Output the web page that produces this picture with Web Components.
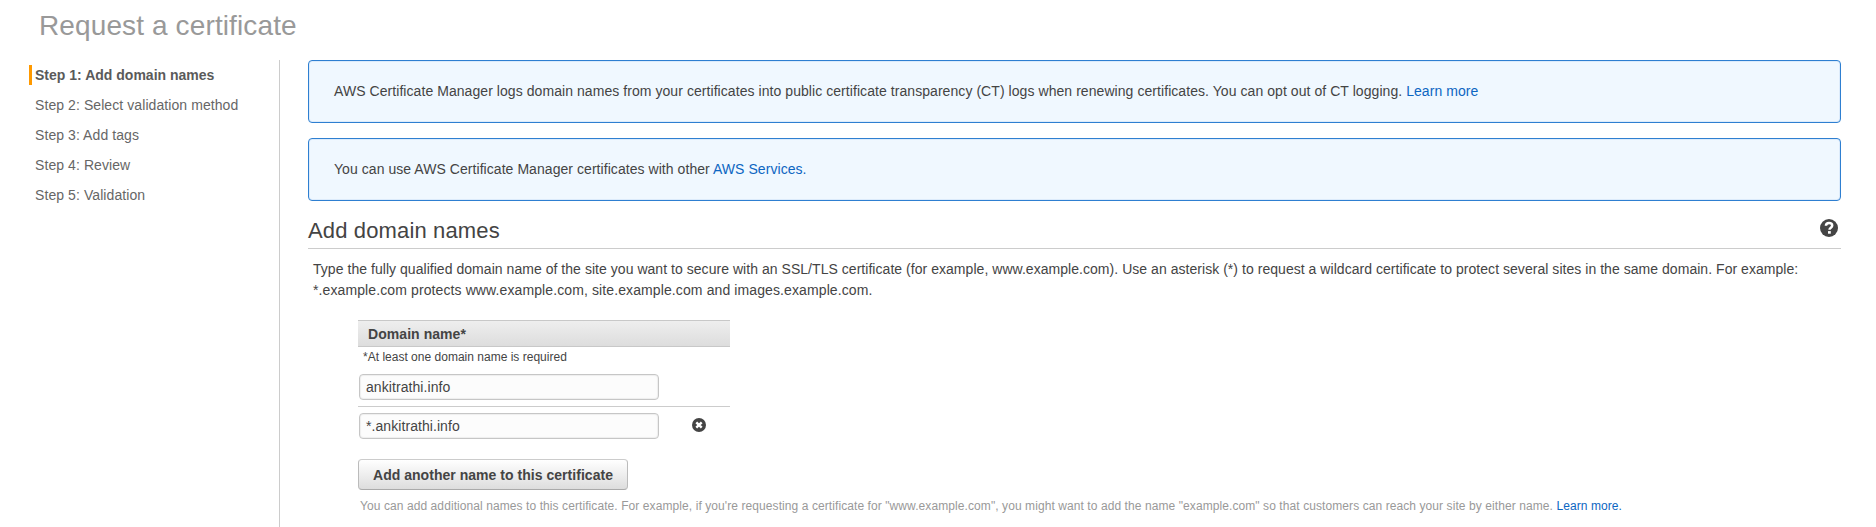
<!DOCTYPE html>
<html lang="en">
<head>
<meta charset="utf-8">
<title>Request a certificate</title>
<style>
  body { margin: 0; background: #fff; color: #444; font: 14px/20px "Liberation Sans", Arial, sans-serif; overflow: hidden; }
</style>
</head>
<body>
<acm-wizard heading="Request a certificate">
  <acm-step slot="steps" active style="letter-spacing:.01px">Step 1: Add domain names</acm-step>
  <acm-step slot="steps">Step 2: Select validation method</acm-step>
  <acm-step slot="steps">Step 3: Add tags</acm-step>
  <acm-step slot="steps">Step 4: Review</acm-step>
  <acm-step slot="steps">Step 5: Validation</acm-step>

  <acm-notice style="letter-spacing:.063px">AWS Certificate Manager logs domain names from your certificates into public certificate transparency (CT) logs when renewing certificates. You can opt out of CT logging. <acm-link>Learn more</acm-link></acm-notice>
  <acm-notice style="letter-spacing:.056px">You can use AWS Certificate Manager certificates with other <acm-link>AWS Services.</acm-link></acm-notice>

  <acm-section heading="Add domain names">
    <span slot="description">Type the fully qualified domain name of the site you want to secure with an SSL/TLS certificate (for example, www.example.com). Use an asterisk (*) to request a wildcard certificate to protect several sites in the same domain. For example:<br><span style="letter-spacing:.108px">*.example.com protects www.example.com, site.example.com and images.example.com.</span></span>
    <acm-domain-table heading="Domain name*" note="*At least one domain name is required">
      <acm-domain-row value="ankitrathi.info"></acm-domain-row>
      <acm-domain-row value="*.ankitrathi.info" removable></acm-domain-row>
    </acm-domain-table>
    <acm-button>Add another name to this certificate</acm-button>
    <acm-hint>You can add additional names to this certificate. For example, if you're requesting a certificate for "www.example.com", you might want to add the name "example.com" so that customers can reach your site by either name. <acm-link>Learn more.</acm-link></acm-hint>
  </acm-section>
</acm-wizard>

<script>
  const define = (name, render) => customElements.define(name, class extends HTMLElement {
    connectedCallback() {
      if (this.shadowRoot) return;
      this.attachShadow({ mode: 'open' }).innerHTML = render(this);
    }
  });

  define('acm-wizard', el => `
    <style>
      :host { display: grid; grid-template: 60px 467px / 279px 1fr; }
      h1 { grid-column: 1 / -1; margin: 0; padding: 9px 0 0 39px; font-weight: 400; font-size: 28px; line-height: 33px; letter-spacing: .12px; color: #999; }
      nav { padding-left: 29px; }
      main { border-left: 1px solid #ccc; padding: 0 35px 0 28px; display: flex; flex-direction: column; }
    </style>
    <h1>${el.getAttribute('heading')}</h1>
    <nav><slot name="steps"></slot></nav>
    <main><slot></slot></main>`);

  define('acm-step', () => `
    <style>
      :host { display: flex; align-items: center; height: 30px; line-height: 30px; color: #666; letter-spacing: .08px; }
      :host([active]) { font-weight: 700; color: #5a5a5a; }
      i { width: 3px; height: 20px; margin-right: 3px; }
      :host([active]) i { background: #f90; }
    </style>
    <i></i><slot></slot>`);

  define('acm-link', () => `
    <style>:host { display: inline; color: #0d66c2; cursor: pointer; }</style><slot></slot>`);

  define('acm-notice', () => `
    <style>
      :host { display: block; box-sizing: border-box; height: 63px; margin-bottom: 15px; padding: 20px 25px 0;
        border: 1px solid #2e7fd1; border-radius: 4px; background: #f0f8ff; box-shadow: inset 0 0 0 1px #dcebfb; }
    </style>
    <slot></slot>`);

  define('acm-section', el => `
    <style>
      :host { display: block; margin-top: 1px; }
      header { display: flex; justify-content: space-between; align-items: flex-start; border-bottom: 1px solid #ccc; padding-bottom: 4px; }
      h2 { margin: 1px 0 0; font-weight: 400; font-size: 22px; line-height: 26px; letter-spacing: .14px; }
      svg { margin: 2px 3px 0 0; }
      p { margin: 10px 0 19px; padding-left: 5px; line-height: 21px; letter-spacing: .0415px; white-space: nowrap; }
      .body { padding-left: 50px; }
    </style>
    <header>
      <h2>${el.getAttribute('heading')}</h2>
      <svg width="18" height="18" viewBox="0 0 18 18"><circle cx="9" cy="9" r="9" fill="#444"/><path d="M5.9 6.8C6 4.9 7.3 4.1 9 4.1c1.800 0 3.200.9 3.200 2.500 0 2.200-2.700 2-2.700 4.100" fill="none" stroke="#fff" stroke-width="2.500"/><rect x="8" y="12.100" width="2.800" height="2.600" fill="#fff"/></svg>
    </header>
    <p><slot name="description"></slot></p>
    <div class="body"><slot></slot></div>`);

  define('acm-domain-table', el => `
    <style>
      :host { display: block; width: 372px; }
      .head { border: solid #c8c8c8; border-width: 1px 0; padding: 1px 10px 0; line-height: 24px; font-weight: 700; letter-spacing: .06px; background: linear-gradient(#eee, #ddd); }
      .note { padding: 2px 5px 3px; font-size: 12px; line-height: 16px; letter-spacing: .01px; }
    </style>
    <div class="head">${el.getAttribute('heading')}</div>
    <div class="note">${el.getAttribute('note')}</div>
    <slot></slot>`);

  define('acm-domain-row', el => `
    <style>
      :host { display: flex; align-items: center; padding: 6px 0 6px 1px; }
      :host([removable]) { border-top: 1px solid #ccc; }
      .field { box-sizing: border-box; width: 300px; height: 26px; border: 1px solid #c6c6c6; border-radius: 4px; padding-left: 6px; line-height: 24px; letter-spacing: .07px;
        background: #fcfcfc; box-shadow: inset 0 0 1px 1px #eee; }
      svg { margin: -2px 0 0 33px; }
    </style>
    <div class="field">${el.getAttribute('value')}</div>
    ${el.hasAttribute('removable') ? '<svg width="14" height="14" viewBox="0 0 14 14"><circle cx="7" cy="7" r="7" fill="#444"/><path d="M4.300 4.300l5.400 5.400M9.700 4.300l-5.400 5.400" stroke="#fff" stroke-width="2.400"/></svg>' : ''}`);

  define('acm-button', () => `
    <style>
      :host { display: block; box-sizing: border-box; width: 270px; height: 31px; margin-top: 14px; border: 1px solid #bbb; border-top-color: #ccc; border-bottom-color: #aaa; border-radius: 4px;
        line-height: 31px; text-align: center; font-weight: 700; letter-spacing: .033px; background: linear-gradient(#fff, #ddd); cursor: pointer; }
    </style>
    <slot></slot>`);

  define('acm-hint', () => `
    <style>:host { display: block; margin-top: 8px; padding-left: 2px; font-size: 12px; line-height: 16px; letter-spacing: .083px; color: #999; white-space: nowrap; }</style>
    <slot></slot>`);
</script>
</body>
</html>
